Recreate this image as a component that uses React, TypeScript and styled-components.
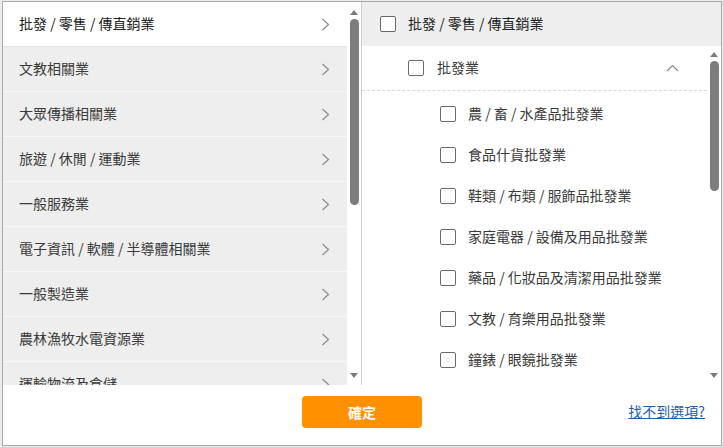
import React from 'react'
import styled, { createGlobalStyle } from 'styled-components'

const categories = [
  '批發 / 零售 / 傳直銷業',
  '文教相關業',
  '大眾傳播相關業',
  '旅遊 / 休閒 / 運動業',
  '一般服務業',
  '電子資訊 / 軟體 / 半導體相關業',
  '一般製造業',
  '農林漁牧水電資源業',
  '運輸物流及倉儲',
]

const subItems = [
  '農 / 畜 / 水產品批發業',
  '食品什貨批發業',
  '鞋類 / 布類 / 服飾品批發業',
  '家庭電器 / 設備及用品批發業',
  '藥品 / 化妝品及清潔用品批發業',
  '文教 / 育樂用品批發業',
  '鐘錶 / 眼鏡批發業',
]

const GlobalStyle = createGlobalStyle`
  html, body {
    margin: 0;
    padding: 0;
    background: #ececec;
    font-family: "Noto Sans CJK TC", "Noto Sans", sans-serif;
    overflow: hidden;
  }
`

const Modal = styled.div`
  margin: 1px 1px 0 2px;
  width: 718px;
  height: 443px;
  border: 1px solid #a9a9a9;
  background: #fff;
  display: flex;
  flex-direction: column;
`

const Panels = styled.div`
  display: flex;
  height: 383px;
  overflow: hidden;
`

const LeftPanel = styled.div`
  width: 358px;
  display: flex;
  background: #fff;
`

const RightPanel = styled.div`
  flex: 1;
  display: flex;
  flex-direction: column;
  border-left: 1px solid #cfcfcf;
  min-width: 0;
`

const CategoryList = styled.div`
  width: 344px;
  overflow: hidden;
`

const CategoryRow = styled.div<{ $active?: boolean }>`
  height: 44px;
  box-sizing: border-box;
  height: 45px;
  border-bottom: 1px solid ${p => (p.$active ? '#e6e6e6' : '#f7f7f7')};
  background: ${p => (p.$active ? '#fff' : '#eeeeee')};
  display: flex;
  align-items: center;
  justify-content: space-between;
  padding: 0 17px 3px 16px;
  font-size: 14px;
  color: ${p => (p.$active ? '#222' : '#3a3a3a')};
  flex-shrink: 0;

  & > svg {
    margin-top: 3px;
  }
`

const Track = styled.div<{ $top: number; $thumb: number }>`
  width: 14px;
  display: flex;
  flex-direction: column;
  align-items: center;
  padding-top: ${p => p.$top}px;
  background: #fff;

  & > .thumb {
    width: 9px;
    height: ${p => p.$thumb}px;
    margin-top: 4px;
    border-radius: 5px;
    background: #7d7d7d;
  }

  & > .spacer {
    flex: 1;
  }
`

const Arrow = styled.div<{ $down?: boolean }>`
  width: 0;
  height: 0;
  border-left: 4.5px solid transparent;
  border-right: 4.5px solid transparent;
  ${p =>
    p.$down
      ? 'border-top: 5px solid #7d7d7d; margin-bottom: 7px;'
      : 'border-bottom: 5px solid #7d7d7d;'}
`

const Header = styled.div`
  height: 44px;
  background: #eeeeee;
  display: flex;
  align-items: center;
  gap: 12px;
  padding-left: 18px;
  font-size: 14px;
  color: #222;
  flex-shrink: 0;
`

const HeaderLabel = styled.span`
  margin-top: -2px;
`

const Body = styled.div`
  flex: 1;
  display: flex;
  min-height: 0;
`

const SubList = styled.div`
  flex: 1;
  overflow: hidden;
`

const GroupRow = styled.div`
  height: 44px;
  display: flex;
  align-items: center;
  gap: 13px;
  padding: 0 28px 0 46px;
  border-bottom: 1px dashed #d8d8d8;
  font-size: 14px;
  color: #3a3a3a;
`

const GroupLabel = styled.span`
  flex: 1;
  margin-top: -2px;
`

const ChildList = styled.div`
  padding-top: 2px;
`

const ChildRow = styled.div`
  height: 41px;
  display: flex;
  align-items: center;
  gap: 12px;
  padding-left: 78px;
  font-size: 14px;
  color: #3a3a3a;
`

const ChildLabel = styled.span`
  margin-top: -2px;
`

const Box = styled.span`
  width: 14px;
  height: 14px;
  border: 1px solid #6a6a6a;
  border-radius: 2px;
  background: #fff;
  flex-shrink: 0;
`

const Footer = styled.div`
  flex: 1;
  display: grid;
  grid-template-columns: 1fr auto 1fr;
  align-items: start;
  padding-top: 11px;
`

const Confirm = styled.button`
  grid-column: 2;
  width: 120px;
  height: 32px;
  border: none;
  border-radius: 4px;
  background: #ff9100;
  color: #fff;
  font-family: inherit;
  font-size: 14px;
  font-weight: 700;
`

const HelpLink = styled.a`
  grid-column: 3;
  justify-self: end;
  margin: 5px 16px 0 0;
  font-size: 14px;
  color: #1f5ea8;
  text-decoration: underline;
`

const ChevronRight = () => (
  <svg width="9" height="13" viewBox="0 0 9 13">
    <polyline points="1.5,1 7.5,6.5 1.5,12" fill="none" stroke="#8a8a8a" strokeWidth="1.2" />
  </svg>
)

const ChevronUp = () => (
  <svg width="13" height="8" viewBox="0 0 13 8">
    <polyline points="1,7 6.5,1.5 12,7" fill="none" stroke="#8a8a8a" strokeWidth="1.2" />
  </svg>
)

const ScrollBar = ({ top, thumb }: { top: number; thumb: number }) => (
  <Track $top={top} $thumb={thumb}>
    <Arrow />
    <div className="thumb" />
    <div className="spacer" />
    <Arrow $down />
  </Track>
)

const App = () => {
  return (
    <>
      <GlobalStyle />
      <Modal>
        <Panels>
          <LeftPanel>
            <CategoryList>
              {categories.map((name, index) => (
                <CategoryRow key={name} $active={index === 0}>
                  <span>{name}</span>
                  <ChevronRight />
                </CategoryRow>
              ))}
            </CategoryList>
            <ScrollBar top={8} thumb={186} />
          </LeftPanel>
          <RightPanel>
            <Header>
              <Box />
              <HeaderLabel>批發 / 零售 / 傳直銷業</HeaderLabel>
            </Header>
            <Body>
              <SubList>
                <GroupRow>
                  <Box />
                  <GroupLabel>批發業</GroupLabel>
                  <ChevronUp />
                </GroupRow>
                <ChildList>
                  {subItems.map(name => (
                    <ChildRow key={name}>
                      <Box />
                      <ChildLabel>{name}</ChildLabel>
                    </ChildRow>
                  ))}
                </ChildList>
              </SubList>
              <ScrollBar top={6} thumb={130} />
            </Body>
          </RightPanel>
        </Panels>
        <Footer>
          <Confirm>確定</Confirm>
          <HelpLink href="#">找不到選項?</HelpLink>
        </Footer>
      </Modal>
    </>
  )
}

export default App
